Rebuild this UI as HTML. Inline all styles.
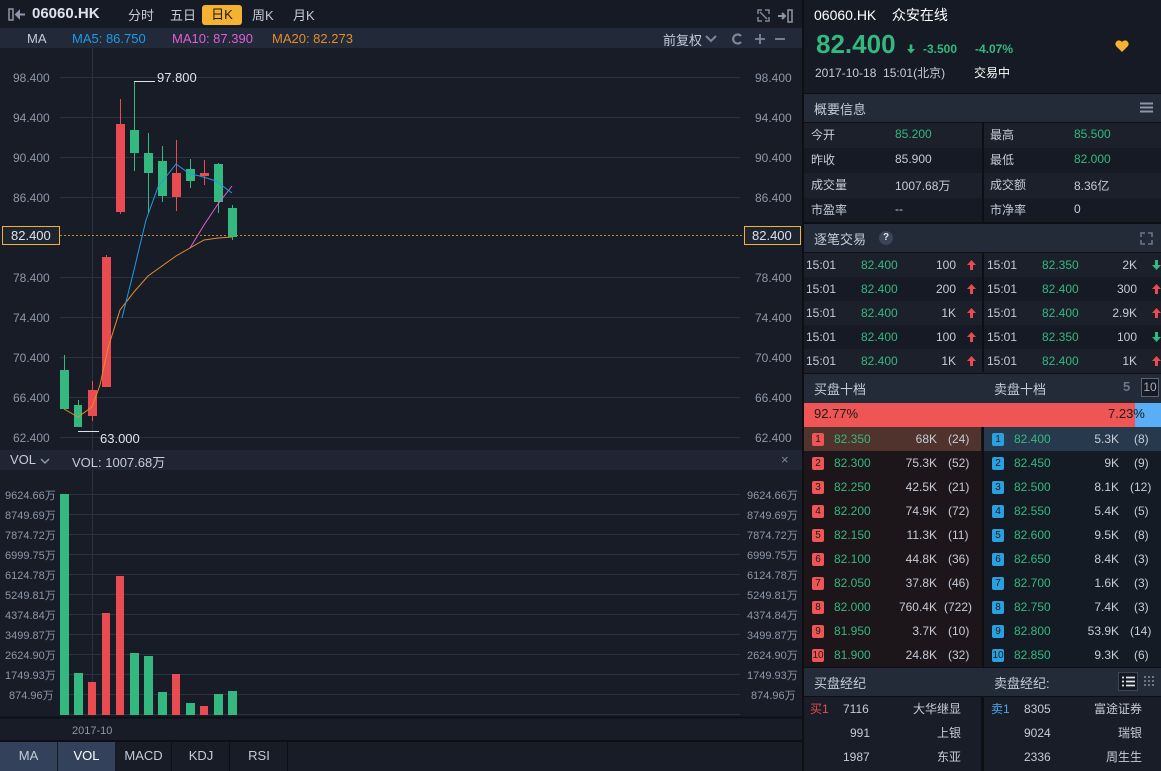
<!DOCTYPE html>
<html><head><meta charset="utf-8"><style>
*{margin:0;padding:0;box-sizing:border-box}
body{width:1161px;height:771px;background:#0d0f14;font-family:"Liberation Sans","Noto Sans CJK SC",sans-serif;font-size:12px;color:#c5ccd8;position:relative;overflow:hidden}
.a{position:absolute;white-space:nowrap}
.g{color:#33b97f}.r{color:#e84c50}
.row{position:absolute;left:0;width:100%;height:24px;line-height:24px}
.up,.dn{position:absolute;top:7px;width:9px;height:10px}
</style></head><body>
<svg width="0" height="0" style="position:absolute">
<defs>
<symbol id="up" viewBox="0 0 9 10"><path d="M4.5 0 L9 5 L6 5 L6 10 L3 10 L3 5 L0 5 Z" fill="#e84c50"/></symbol>
<symbol id="dn" viewBox="0 0 9 10"><path d="M4.5 10 L9 5 L6 5 L6 0 L3 0 L3 5 L0 5 Z" fill="#33b97f"/></symbol>
</defs></svg>
<!-- LEFT -->
<div class="a" style="left:0;top:0;width:802px;height:28px;background:#161a24"></div>
<svg class="a" style="left:8px;top:8px" width="18" height="13"><rect x="1" y="1" width="4" height="11" fill="none" stroke="#8d97a8" stroke-width="1.5"/><path d="M8 6.5 H17 M8 6.5 L11 3.5 V9.5 Z" stroke="#8d97a8" stroke-width="2" fill="#8d97a8"/></svg>
<div class="a" style="left:32px;top:5px;font-size:15px;font-weight:bold;color:#dde3ec">06060.HK</div>
<div class="a" style="left:128px;top:5px;font-size:13px">分时</div>
<div class="a" style="left:170px;top:5px;font-size:13px">五日</div>
<div class="a" style="left:202px;top:5px;width:40px;height:20px;background:#f5b230;border-radius:3px;color:#1a1a1a;text-align:center;line-height:19px;font-size:13px">日K</div>
<div class="a" style="left:252px;top:5px;font-size:13px">周K</div>
<div class="a" style="left:293px;top:5px;font-size:13px">月K</div>
<svg class="a" style="left:757px;top:9px" width="40" height="14"><path d="M1 5 V1 H5 M8 1 H12 V5 M12 8 V12 H8 M5 12 H1 V8 M3 3 L10 10" stroke="#7d879a" stroke-width="1.5" fill="none"/><path d="M21 7 H28 M25 4 L28 7 L25 10" stroke="#8d97a8" stroke-width="2" fill="none"/><rect x="31" y="1" width="4" height="12" fill="none" stroke="#8d97a8" stroke-width="1.5"/></svg>
<div class="a" style="left:0;top:28px;width:802px;height:20px;background:#222938"></div>
<div class="a" style="left:27px;top:31px;font-size:13px">MA</div>
<div class="a" style="left:72px;top:31px;font-size:13px;color:#1e9be6">MA5: 86.750</div>
<div class="a" style="left:172px;top:31px;font-size:13px;color:#e05fd4">MA10: 87.390</div>
<div class="a" style="left:272px;top:31px;font-size:13px;color:#e58c2a">MA20: 82.273</div>
<div class="a" style="left:663px;top:30px;font-size:13px">前复权</div>
<svg class="a" style="left:704px;top:32px" width="90" height="14"><path d="M2 4 L7 9 L12 4" stroke="#7d879a" stroke-width="2" fill="none"/><path d="M37 4 A4.5 4.5 0 1 0 37 10" stroke="#7d879a" stroke-width="2.2" fill="none"/><path d="M51 7 H61 M56 2 V12" stroke="#7d879a" stroke-width="1.8"/><path d="M71 7 H81" stroke="#7d879a" stroke-width="1.8"/></svg>
<div class="a" style="left:0;top:48px;width:802px;height:402px;background:#181c27"></div>
<div class="a" style="left:0;top:450px;width:802px;height:20px;background:#1f2532"></div>
<div class="a" style="left:10px;top:452px;font-size:13px">VOL</div>
<svg class="a" style="left:40px;top:457px" width="10" height="8"><path d="M1 2 L5 6 L9 2" stroke="#8d97a8" stroke-width="1.5" fill="none"/></svg>
<div class="a" style="left:72px;top:452px;font-size:13px">VOL: 1007.68万</div>
<div class="a" style="left:781px;top:452px;font-size:13px;color:#7d879a">×</div>
<div class="a" style="left:0;top:470px;width:802px;height:301px;background:#181c27"></div>
<svg class="a" style="left:0;top:0" width="802" height="771">
<g stroke="#2a3140" stroke-width="1">
<line x1="60" y1="77.5" x2="740" y2="77.5"/><line x1="60" y1="117.5" x2="740" y2="117.5"/><line x1="60" y1="157.5" x2="740" y2="157.5"/><line x1="60" y1="197.5" x2="740" y2="197.5"/><line x1="60" y1="277.5" x2="740" y2="277.5"/><line x1="60" y1="317.5" x2="740" y2="317.5"/><line x1="60" y1="357.5" x2="740" y2="357.5"/><line x1="60" y1="397.5" x2="740" y2="397.5"/><line x1="60" y1="437.5" x2="740" y2="437.5"/>
<line x1="92.5" y1="48" x2="92.5" y2="450"/><line x1="92.5" y1="470" x2="92.5" y2="717"/>
<line x1="60" y1="494.5" x2="740" y2="494.5"/><line x1="60" y1="514.5" x2="740" y2="514.5"/><line x1="60" y1="534.5" x2="740" y2="534.5"/><line x1="60" y1="554.5" x2="740" y2="554.5"/><line x1="60" y1="574.5" x2="740" y2="574.5"/><line x1="60" y1="594.5" x2="740" y2="594.5"/><line x1="60" y1="614.5" x2="740" y2="614.5"/><line x1="60" y1="634.5" x2="740" y2="634.5"/><line x1="60" y1="654.5" x2="740" y2="654.5"/><line x1="60" y1="674.5" x2="740" y2="674.5"/><line x1="60" y1="694.5" x2="740" y2="694.5"/><line x1="60" y1="714.5" x2="740" y2="714.5"/>
</g>
<line x1="60" y1="235.5" x2="745" y2="235.5" stroke="#c08a30" stroke-dasharray="2,2"/>
<g font-family="Liberation Sans" font-size="12" fill="#8d97a8">
<text x="13" y="82">98.400</text><text x="13" y="122">94.400</text><text x="13" y="162">90.400</text><text x="13" y="202">86.400</text><text x="13" y="282">78.400</text><text x="13" y="322">74.400</text><text x="13" y="362">70.400</text><text x="13" y="402">66.400</text><text x="13" y="442">62.400</text>
<text x="755" y="82">98.400</text><text x="755" y="122">94.400</text><text x="755" y="162">90.400</text><text x="755" y="202">86.400</text><text x="755" y="282">78.400</text><text x="755" y="322">74.400</text><text x="755" y="362">70.400</text><text x="755" y="402">66.400</text><text x="755" y="442">62.400</text>
</g>
<g font-family="Liberation Sans, Noto Sans CJK SC" font-size="11" fill="#8d97a8">
<text x="5" y="499">9624.66万</text><text x="5" y="519">8749.69万</text><text x="5" y="539">7874.72万</text><text x="5" y="559">6999.75万</text><text x="5" y="579">6124.78万</text><text x="5" y="599">5249.81万</text><text x="5" y="619">4374.84万</text><text x="5" y="639">3499.87万</text><text x="5" y="659">2624.90万</text><text x="5" y="679">1749.93万</text><text x="9" y="699">874.96万</text>
<text x="747" y="499">9624.66万</text><text x="747" y="519">8749.69万</text><text x="747" y="539">7874.72万</text><text x="747" y="559">6999.75万</text><text x="747" y="579">6124.78万</text><text x="747" y="599">5249.81万</text><text x="747" y="619">4374.84万</text><text x="747" y="639">3499.87万</text><text x="747" y="659">2624.90万</text><text x="747" y="679">1749.93万</text><text x="751" y="699">874.96万</text>
<text x="72" y="734">2017-10</text>
</g>
<rect x="2.5" y="226.5" width="57" height="18" fill="#1e2430" stroke="#f0b23a"/>
<text x="11" y="240" font-family="Liberation Sans" font-size="13" fill="#dde3ec">82.400</text>
<rect x="744.5" y="226.5" width="56" height="18" fill="#1e2430" stroke="#f0b23a"/>
<text x="752" y="240" font-family="Liberation Sans" font-size="13" fill="#dde3ec">82.400</text>
<g stroke-width="1">
<line x1="64.5" y1="355" x2="64.5" y2="409" stroke="#33b97f"/><rect x="60" y="370" width="9" height="39" fill="#33b97f"/>
<line x1="78.5" y1="400" x2="78.5" y2="427" stroke="#33b97f"/><rect x="74" y="405" width="8" height="22" fill="#33b97f"/>
<line x1="92.5" y1="381" x2="92.5" y2="421" stroke="#e84c50"/><rect x="88" y="390" width="9" height="26" fill="#e84c50"/>
<line x1="106.5" y1="255" x2="106.5" y2="387" stroke="#e84c50"/><rect x="102" y="257" width="9" height="130" fill="#e84c50"/>
<line x1="120.5" y1="99" x2="120.5" y2="214" stroke="#e84c50"/><rect x="116" y="124" width="9" height="88" fill="#e84c50"/>
<line x1="134.5" y1="81" x2="134.5" y2="171" stroke="#33b97f"/><rect x="130" y="130" width="9" height="23" fill="#33b97f"/>
<line x1="148.5" y1="133" x2="148.5" y2="213" stroke="#33b97f"/><rect x="144" y="153" width="9" height="20" fill="#33b97f"/>
<line x1="162.5" y1="146" x2="162.5" y2="202" stroke="#33b97f"/><rect x="158" y="161" width="9" height="35" fill="#33b97f"/>
<line x1="176.5" y1="140" x2="176.5" y2="211" stroke="#e84c50"/><rect x="172" y="173" width="9" height="24" fill="#e84c50"/>
<line x1="190.5" y1="159" x2="190.5" y2="188" stroke="#33b97f"/><rect x="186" y="169" width="9" height="12" fill="#33b97f"/>
<line x1="204.5" y1="160" x2="204.5" y2="185" stroke="#e84c50"/><rect x="200" y="173" width="9" height="3" fill="#e84c50"/>
<line x1="218.5" y1="163" x2="218.5" y2="213" stroke="#33b97f"/><rect x="214" y="164" width="9" height="38" fill="#33b97f"/>
<line x1="232.5" y1="205" x2="232.5" y2="240" stroke="#33b97f"/><rect x="228" y="208" width="9" height="29" fill="#33b97f"/>
</g>
<polyline fill="none" stroke="#e58c2a" points="64,409 78,417 92,407 100,385 108,348 120,310 134,292 148,276 162,266 176,256 190,248 204,240 218,238 232,237"/>
<polyline fill="none" stroke="#e05fd4" points="190,248 204,225 218,204 232,186"/>
<polyline fill="none" stroke="#1e9be6" points="122,318 134,270 146,220 158,187 176,164 190,174 200,176 216,181 232,193"/>
<line x1="134" y1="81.5" x2="155" y2="81.5" stroke="#dde3ec"/>
<text x="157" y="82" font-family="Liberation Sans" font-size="13" fill="#dde3ec">97.800</text>
<line x1="78" y1="431.5" x2="99" y2="431.5" stroke="#dde3ec"/>
<text x="100" y="443" font-family="Liberation Sans" font-size="13" fill="#dde3ec">63.000</text>
<rect x="60" y="494" width="9" height="221" fill="#33b97f"/>
<rect x="74" y="673" width="9" height="42" fill="#33b97f"/>
<rect x="88" y="682" width="8" height="33" fill="#e84c50"/>
<rect x="102" y="613" width="8" height="102" fill="#e84c50"/>
<rect x="116" y="576" width="8" height="139" fill="#e84c50"/>
<rect x="130" y="653" width="9" height="62" fill="#33b97f"/>
<rect x="144" y="656" width="9" height="59" fill="#33b97f"/>
<rect x="158" y="692" width="9" height="23" fill="#33b97f"/>
<rect x="172" y="674" width="8" height="41" fill="#e84c50"/>
<rect x="186" y="703" width="9" height="12" fill="#33b97f"/>
<rect x="200" y="706" width="8" height="9" fill="#e84c50"/>
<rect x="214" y="694" width="9" height="21" fill="#33b97f"/>
<rect x="228" y="691" width="9" height="24" fill="#33b97f"/>
<line x1="0" y1="717.5" x2="802" y2="717.5" stroke="#0d0f14" stroke-width="2"/>
<line x1="0" y1="741" x2="802" y2="741" stroke="#0d0f14" stroke-width="2"/>
</svg>
<div class="a" style="left:0;top:742px;width:802px;height:29px;background:#181c27"></div>
<div class="a" style="left:0;top:742px;width:57px;height:29px;background:#33425a;text-align:center;line-height:27px;font-size:13px">MA</div>
<div class="a" style="left:58px;top:742px;width:57px;height:29px;background:#33425a;text-align:center;line-height:27px;font-size:13px;color:#fff">VOL</div>
<div class="a" style="left:116px;top:742px;width:56px;height:29px;border-right:1px solid #0d0f14;text-align:center;line-height:27px;font-size:13px">MACD</div>
<div class="a" style="left:173px;top:742px;width:57px;height:29px;border-right:1px solid #0d0f14;text-align:center;line-height:27px;font-size:13px">KDJ</div>
<div class="a" style="left:231px;top:742px;width:57px;height:29px;border-right:1px solid #0d0f14;text-align:center;line-height:27px;font-size:13px">RSI</div>

<!-- RIGHT -->
<div class="a" style="left:804px;top:0;width:357px;height:93px;background:#161a24"></div>
<div class="a" style="left:814px;top:5px;font-size:14px;color:#fff">06060.HK &nbsp;&nbsp;&nbsp;众安在线</div>
<div class="a g" style="left:816px;top:29px;font-size:26px;font-weight:bold">82.400</div>
<svg class="a" style="left:907px;top:44px" width="8" height="10"><use href="#dn"/></svg>
<div class="a g" style="left:923px;top:42px;font-size:12px;font-weight:bold">-3.500</div>
<div class="a g" style="left:975px;top:42px;font-size:12px;font-weight:bold">-4.07%</div>
<svg class="a" style="left:1115px;top:40px" width="14" height="12"><path d="M7 12 L1 6 A3.3 3.3 0 0 1 7 2 A3.3 3.3 0 0 1 13 6 Z" fill="#f5b230"/></svg>
<div class="a" style="left:815px;top:64px;font-size:12px">2017-10-18 &nbsp;15:01(北京)</div>
<div class="a" style="left:974px;top:64px;font-size:12px;color:#fff">交易中</div>

<div class="a" style="left:804px;top:94px;width:357px;height:28px;background:#232a38"></div>
<div class="a" style="left:814px;top:99px;font-size:13px">概要信息</div>
<svg class="a" style="left:1140px;top:102px" width="13" height="11"><path d="M0 1.5 H13 M0 5.5 H13 M0 9.5 H13" stroke="#8d97a8" stroke-width="2"/></svg>
<div class="a" style="left:804px;top:123px;width:357px;height:99px;background:#161a24">
 <div class="row" style="top:0;height:25px;background:#1b202b"></div><div class="row" style="top:50px;height:25px;background:#1b202b"></div>
 <div class="a" style="left:178px;top:0;width:2px;height:99px;background:#0d0f14"></div>
 <div class="a" style="left:7px;top:3px">今开</div><div class="a g" style="left:91px;top:4px">85.200</div><div class="a" style="left:186px;top:3px">最高</div><div class="a g" style="left:270px;top:4px">85.500</div>
 <div class="a" style="left:7px;top:28px">昨收</div><div class="a" style="left:91px;top:29px">85.900</div><div class="a" style="left:186px;top:28px">最低</div><div class="a g" style="left:270px;top:29px">82.000</div>
 <div class="a" style="left:7px;top:53px">成交量</div><div class="a" style="left:91px;top:54px">1007.68万</div><div class="a" style="left:186px;top:53px">成交额</div><div class="a" style="left:270px;top:54px">8.36亿</div>
 <div class="a" style="left:7px;top:78px">市盈率</div><div class="a" style="left:91px;top:79px">--</div><div class="a" style="left:186px;top:78px">市净率</div><div class="a" style="left:270px;top:79px">0</div>
</div>
<div class="a" style="left:804px;top:224px;width:357px;height:28px;background:#232a38"></div>
<div class="a" style="left:814px;top:229px;font-size:13px">逐笔交易</div>
<div class="a" style="left:879px;top:231px;width:14px;height:14px;border-radius:7px;background:#3b4558;color:#dde3ec;font-size:10px;text-align:center;line-height:14px;font-weight:bold">?</div>
<svg class="a" style="left:1140px;top:232px" width="13" height="13"><path d="M1 5 V1 H5 M8 1 H12 V5 M12 8 V12 H8 M5 12 H1 V8" stroke="#6d778a" stroke-width="1.5" fill="none"/></svg>
<div class="a" style="left:804px;top:253px;width:357px;height:119px;background:#161a24;font-size:12px">
 <div class="row" style="top:0;background:#1b202b"></div><div class="row" style="top:48px;background:#1b202b"></div><div class="row" style="top:96px;background:#1b202b"></div>
 <div class="a" style="left:178px;top:0;width:2px;height:119px;background:#0d0f14"></div>
 <div class="row" style="top:0"><span class="a" style="left:2px">15:01</span><span class="a g" style="left:57px">82.400</span><span class="a" style="right:205px">100</span><svg class="up" style="left:163px"><use href="#up"/></svg><span class="a" style="left:183px">15:01</span><span class="a g" style="left:238px">82.350</span><span class="a" style="right:24px">2K</span><svg class="dn" style="left:348px"><use href="#dn"/></svg></div>
 <div class="row" style="top:24px"><span class="a" style="left:2px">15:01</span><span class="a g" style="left:57px">82.400</span><span class="a" style="right:205px">200</span><svg class="up" style="left:163px"><use href="#up"/></svg><span class="a" style="left:183px">15:01</span><span class="a g" style="left:238px">82.400</span><span class="a" style="right:24px">300</span><svg class="up" style="left:348px"><use href="#up"/></svg></div>
 <div class="row" style="top:48px"><span class="a" style="left:2px">15:01</span><span class="a g" style="left:57px">82.400</span><span class="a" style="right:205px">1K</span><svg class="up" style="left:163px"><use href="#up"/></svg><span class="a" style="left:183px">15:01</span><span class="a g" style="left:238px">82.400</span><span class="a" style="right:24px">2.9K</span><svg class="up" style="left:348px"><use href="#up"/></svg></div>
 <div class="row" style="top:72px"><span class="a" style="left:2px">15:01</span><span class="a g" style="left:57px">82.400</span><span class="a" style="right:205px">100</span><svg class="up" style="left:163px"><use href="#up"/></svg><span class="a" style="left:183px">15:01</span><span class="a g" style="left:238px">82.350</span><span class="a" style="right:24px">100</span><svg class="dn" style="left:348px"><use href="#dn"/></svg></div>
 <div class="row" style="top:96px"><span class="a" style="left:2px">15:01</span><span class="a g" style="left:57px">82.400</span><span class="a" style="right:205px">1K</span><svg class="up" style="left:163px"><use href="#up"/></svg><span class="a" style="left:183px">15:01</span><span class="a g" style="left:238px">82.400</span><span class="a" style="right:24px">1K</span><svg class="up" style="left:348px"><use href="#up"/></svg></div>
</div>
<div class="a" style="left:804px;top:374px;width:357px;height:29px;background:#232a38"></div>
<div class="a" style="left:814px;top:379px;font-size:13px">买盘十档</div>
<div class="a" style="left:994px;top:379px;font-size:13px">卖盘十档</div>
<div class="a" style="left:1123px;top:379px;font-size:13px;color:#6d778a;font-weight:bold">5</div>
<div class="a" style="left:1141px;top:378px;width:18px;height:19px;border:1px solid #5a6478;background:#151922;color:#aab;font-size:12px;text-align:center;line-height:17px">10</div>
<div class="a" style="left:804px;top:403px;width:331px;height:24px;background:#f05555"></div>
<div class="a" style="left:1135px;top:403px;width:26px;height:24px;background:#5aaef5"></div>
<div class="a" style="left:814px;top:406px;font-size:13px;color:#1a1a1a">92.77%</div>
<div class="a" style="left:1108px;top:406px;font-size:13px;color:#1a1a1a">7.23%</div>
<div class="a" style="left:804px;top:427px;width:178px;height:240px;background:#1c1519"></div>
<div class="a" style="left:984px;top:427px;width:177px;height:240px;background:#141b24"></div>
<div class="a" style="left:804px;top:427px;width:177px;height:24px;background:#4f332c"></div>
<div class="a" style="left:984px;top:427px;width:177px;height:24px;background:#27394c"></div>
<div class="a" style="left:804px;top:427px;width:357px;height:240px;font-size:12px">
<style>.bn{position:absolute;width:12px;height:13px;border-radius:2px;font-size:10px;text-align:center;line-height:13px;color:#1a1a1a;top:6px}.rb{background:#f05555;left:8px}.bb{background:#2aa0e0;left:188px}</style>
<div class="row" style="top:0"><span class="bn rb">1</span><span class="a g" style="left:30px">82.350</span><span class="a" style="right:224px">68K</span><span class="a" style="left:144px">(24)</span><span class="bn bb">1</span><span class="a g" style="left:210px">82.400</span><span class="a" style="right:42px">5.3K</span><span class="a" style="left:330px">(8)</span></div>
<div class="row" style="top:24px"><span class="bn rb">2</span><span class="a g" style="left:30px">82.300</span><span class="a" style="right:224px">75.3K</span><span class="a" style="left:144px">(52)</span><span class="bn bb">2</span><span class="a g" style="left:210px">82.450</span><span class="a" style="right:42px">9K</span><span class="a" style="left:330px">(9)</span></div>
<div class="row" style="top:48px"><span class="bn rb">3</span><span class="a g" style="left:30px">82.250</span><span class="a" style="right:224px">42.5K</span><span class="a" style="left:144px">(21)</span><span class="bn bb">3</span><span class="a g" style="left:210px">82.500</span><span class="a" style="right:42px">8.1K</span><span class="a" style="left:326px">(12)</span></div>
<div class="row" style="top:72px"><span class="bn rb">4</span><span class="a g" style="left:30px">82.200</span><span class="a" style="right:224px">74.9K</span><span class="a" style="left:144px">(72)</span><span class="bn bb">4</span><span class="a g" style="left:210px">82.550</span><span class="a" style="right:42px">5.4K</span><span class="a" style="left:330px">(5)</span></div>
<div class="row" style="top:96px"><span class="bn rb">5</span><span class="a g" style="left:30px">82.150</span><span class="a" style="right:224px">11.3K</span><span class="a" style="left:144px">(11)</span><span class="bn bb">5</span><span class="a g" style="left:210px">82.600</span><span class="a" style="right:42px">9.5K</span><span class="a" style="left:330px">(8)</span></div>
<div class="row" style="top:120px"><span class="bn rb">6</span><span class="a g" style="left:30px">82.100</span><span class="a" style="right:224px">44.8K</span><span class="a" style="left:144px">(36)</span><span class="bn bb">6</span><span class="a g" style="left:210px">82.650</span><span class="a" style="right:42px">8.4K</span><span class="a" style="left:330px">(3)</span></div>
<div class="row" style="top:144px"><span class="bn rb">7</span><span class="a g" style="left:30px">82.050</span><span class="a" style="right:224px">37.8K</span><span class="a" style="left:144px">(46)</span><span class="bn bb">7</span><span class="a g" style="left:210px">82.700</span><span class="a" style="right:42px">1.6K</span><span class="a" style="left:330px">(3)</span></div>
<div class="row" style="top:168px"><span class="bn rb">8</span><span class="a g" style="left:30px">82.000</span><span class="a" style="right:224px">760.4K</span><span class="a" style="left:140px">(722)</span><span class="bn bb">8</span><span class="a g" style="left:210px">82.750</span><span class="a" style="right:42px">7.4K</span><span class="a" style="left:330px">(3)</span></div>
<div class="row" style="top:192px"><span class="bn rb">9</span><span class="a g" style="left:30px">81.950</span><span class="a" style="right:224px">3.7K</span><span class="a" style="left:144px">(10)</span><span class="bn bb">9</span><span class="a g" style="left:210px">82.800</span><span class="a" style="right:42px">53.9K</span><span class="a" style="left:326px">(14)</span></div>
<div class="row" style="top:216px"><span class="bn rb">10</span><span class="a g" style="left:30px">81.900</span><span class="a" style="right:224px">24.8K</span><span class="a" style="left:144px">(32)</span><span class="bn bb">10</span><span class="a g" style="left:210px">82.850</span><span class="a" style="right:42px">9.3K</span><span class="a" style="left:330px">(6)</span></div>
</div>
<div class="a" style="left:804px;top:668px;width:357px;height:28px;background:#232a38"></div>
<div class="a" style="left:814px;top:673px;font-size:13px">买盘经纪</div>
<div class="a" style="left:994px;top:673px;font-size:13px">卖盘经纪:</div>
<div class="a" style="left:1118px;top:672px;width:20px;height:19px;background:#151922;border:1px solid #3b4558"></div>
<svg class="a" style="left:1122px;top:676px" width="13" height="11"><path d="M0 1.5 H2 M0 5.5 H2 M0 9.5 H2 M4 1.5 H13 M4 5.5 H13 M4 9.5 H13" stroke="#dde3ec" stroke-width="1.8"/></svg>
<svg class="a" style="left:1144px;top:676px" width="11" height="11"><g fill="#6d778a"><rect x="0" y="0" width="2" height="2"/><rect x="4" y="0" width="2" height="2"/><rect x="8" y="0" width="2" height="2"/><rect x="0" y="4" width="2" height="2"/><rect x="4" y="4" width="2" height="2"/><rect x="8" y="4" width="2" height="2"/><rect x="0" y="8" width="2" height="2"/><rect x="4" y="8" width="2" height="2"/><rect x="8" y="8" width="2" height="2"/></g></svg>
<div class="a" style="left:804px;top:697px;width:177px;height:74px;background:#181d28"></div>
<div class="a" style="left:984px;top:697px;width:177px;height:74px;background:#181d28"></div>
<div class="a" style="left:804px;top:697px;width:357px;height:74px;font-size:12px">
<div class="row" style="top:0"><span class="a r" style="left:6px">买1</span><span class="a" style="left:39px">7116</span><span class="a" style="right:200px">大华继显</span><span class="a" style="left:187px;color:#4aa8f0">卖1</span><span class="a" style="left:220px">8305</span><span class="a" style="right:19px">富途证券</span></div>
<div class="row" style="top:24px"><span class="a" style="left:46px">991</span><span class="a" style="right:200px">上银</span><span class="a" style="left:220px">9024</span><span class="a" style="right:19px">瑞银</span></div>
<div class="row" style="top:48px"><span class="a" style="left:39px">1987</span><span class="a" style="right:200px">东亚</span><span class="a" style="left:220px">2336</span><span class="a" style="right:19px">周生生</span></div>
</div>
</body></html>
